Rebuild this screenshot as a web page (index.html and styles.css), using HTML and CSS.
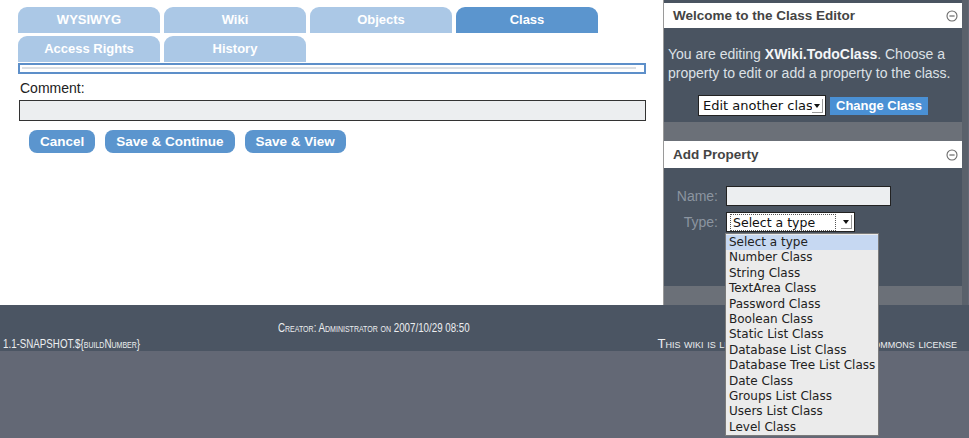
FILE: index.html
```html
<!DOCTYPE html>
<html lang="en">
<head>
    <meta charset="UTF-8">
    <title>Class Editor</title>
    <link rel="stylesheet" href="styles.css">
</head>
<body>
    <div class="page">
        <div class="main">
            <div class="tabs">
                <div class="tab">WYSIWYG</div>
                <div class="tab">Wiki</div>
                <div class="tab">Objects</div>
                <div class="tab active">Class</div>
                <div class="tab">Access Rights</div>
                <div class="tab">History</div>
            </div>
            <div class="editbox"><div class="editbox-line"></div></div>

            <div class="comment-label">Comment:</div>
            <div class="comment-input"></div>

            <div class="buttons">
                <span class="button">Cancel</span>
                <span class="button">Save &amp; Continue</span>
                <span class="button">Save &amp; View</span>
            </div>
        </div>

        <div class="sidebar">
            <div class="panel-title">
                <span>Welcome to the Class Editor</span>
                <svg class="toggle" width="12" height="12" viewBox="0 0 12 12"><circle cx="6" cy="6" r="5" fill="none" stroke="#6a6a6a" stroke-width="1.1"/><line x1="3.4" y1="6" x2="8.6" y2="6" stroke="#6a6a6a" stroke-width="1.2"/></svg>
            </div>
            <div class="panel-body">
                <p class="intro">You are editing <b>XWiki.TodoClass</b>. Choose a property to edit or add a property to the class.</p>
                <div class="change-row">
                    <span class="fake-select wide"><span class="fake-value">Edit another class</span><span class="arrow"></span></span>
                    <span class="change-button">Change Class</span>
                </div>
            </div>
            <div class="panel-gap"></div>

            <div class="panel-title tall">
                <span>Add Property</span>
                <svg class="toggle" width="12" height="12" viewBox="0 0 12 12"><circle cx="6" cy="6" r="5" fill="none" stroke="#6a6a6a" stroke-width="1.1"/><line x1="3.4" y1="6" x2="8.6" y2="6" stroke="#6a6a6a" stroke-width="1.2"/></svg>
            </div>
            <div class="panel-body add-body">
                <div class="field-row">
                    <span class="field-label">Name:</span>
                    <span class="name-input"></span>
                </div>
                <div class="field-row">
                    <span class="field-label">Type:</span>
                    <span class="fake-select type-select"><span class="fake-value focused">Select a type</span><span class="arrow"></span></span>
                </div>
                <!-- open list of the type select -->
                <ul class="type-list">
                    <li class="selected">Select a type</li>
                    <li>Number Class</li>
                    <li>String Class</li>
                    <li>TextArea Class</li>
                    <li>Password Class</li>
                    <li>Boolean Class</li>
                    <li>Static List Class</li>
                    <li>Database List Class</li>
                    <li>Database Tree List Class</li>
                    <li>Date Class</li>
                    <li>Groups List Class</li>
                    <li>Users List Class</li>
                    <li>Level Class</li>
                </ul>
            </div>
            <div class="panel-gap"></div>
        </div>
    </div>

    <div class="footer">
        <div class="footer-info"><span>Creator: Administrator on 2007/10/29 08:50</span></div>
        <div class="footer-bottom">
            <span class="version">1.1-SNAPSHOT.${buildNumber}</span>
            <span class="license">This wiki is licensed under a Creative Commons license</span>
        </div>
    </div>
</body>
</html>
```

FILE: styles.css
```css
body {
    margin: 0;
    min-height: 100vh;
    background-color: #636875;
    font-family: 'Liberation Sans', Arial, sans-serif;
}
.page {
    display: flex;
    height: 305px;
}
.main {
    width: 664px;
    background: white;
    border-right: 1px solid #9a9a9a;
    padding: 7px 0 0 18px;
    box-sizing: border-box;
}
.tabs {
    display: grid;
    grid-template-columns: repeat(4, 142px);
    column-gap: 4px;
    row-gap: 3px;
}
.tab {
    height: 26px;
    line-height: 26px;
    text-align: center;
    background-color: #abc8e6;
    color: white;
    font-weight: bold;
    font-size: 13px;
    border-radius: 9px 9px 0 0;
}
.tab.active {
    background-color: #5b95ce;
}
.editbox {
    width: 628px;
    height: 11px;
    margin-top: 1px;
    border: 2px solid #5d8fc9;
    box-sizing: border-box;
    padding: 2px 8px 0 2px;
}
.editbox-line {
    border-top: 2px solid #dcdfe3;
}
.comment-label {
    margin: 6px 0 0 2px;
    font-size: 14px;
    color: #222;
    line-height: 17px;
}
.comment-input {
    width: 627px;
    height: 21px;
    margin: 3px 0 0 1px;
    background-color: #eceef0;
    border: 1px solid #333;
    box-sizing: border-box;
}
.buttons {
    display: flex;
    gap: 10px;
    margin: 9px 0 0 11px;
}
.button {
    height: 23px;
    line-height: 23px;
    padding: 0 11px;
    background-color: #5b95ce;
    color: white;
    font-weight: bold;
    font-size: 13.5px;
    border-radius: 8px;
}

/* right column with the editor panels */
.sidebar {
    width: 304px;
    background-color: #4a5461;
    border-right: 6px solid #5a616b;
    padding-top: 3px;
    box-sizing: border-box;
}
.panel-title {
    display: flex;
    justify-content: space-between;
    align-items: center;
    height: 25px;
    padding: 0 4px 0 9px;
    background: white;
    color: #444;
    font-weight: bold;
    font-size: 13.5px;
}
.panel-title.tall {
    height: 27px;
}
.panel-body {
    position: relative;
    height: 94px;
    padding: 17px 4px 0 4px;
    box-sizing: border-box;
}
.intro {
    margin: 0;
    font-size: 14px;
    line-height: 19px;
    color: #dde1e6;
}
.intro b {
    color: #f4f6f8;
}
.change-row {
    display: flex;
    justify-content: center;
    align-items: center;
    gap: 4px;
    margin-top: 12px;
}
.panel-gap {
    height: 19px;
    background-color: #6b7078;
}
.fake-select {
    display: flex;
    align-items: center;
    height: 21px;
    background: white;
    border: 1px solid #222;
    box-sizing: border-box;
    font-family: 'DejaVu Sans', sans-serif;
    font-size: 13px;
    color: #111;
    overflow: hidden;
    padding: 0 2px 0 4px;
}
.fake-select.wide {
    width: 128px;
}
.fake-value {
    flex: 1;
    white-space: nowrap;
    overflow: hidden;
}
.fake-value.focused {
    outline: 1px dotted #555;
    padding-left: 2px;
    margin-right: 6px;
}
.arrow {
    flex: none;
    width: 10px;
    height: 13px;
    border-right: 1px solid #999;
    border-bottom: 1px solid #999;
    background: white;
    position: relative;
}
.arrow::after {
    content: "";
    position: absolute;
    left: 2px;
    top: 5px;
    border-left: 3px solid transparent;
    border-right: 3px solid transparent;
    border-top: 4px solid #111;
}
.change-button {
    height: 18px;
    line-height: 18px;
    padding: 0 6px;
    background-color: #4a90d4;
    color: white;
    font-weight: bold;
    font-size: 13px;
}
.add-body {
    height: 118px;
    padding-top: 18px;
}
.field-row {
    display: flex;
    align-items: center;
    gap: 8px;
    margin-bottom: 6px;
}
.field-label {
    width: 50px;
    text-align: right;
    color: #8c95a0;
    font-size: 14px;
}
.name-input {
    width: 165px;
    height: 20px;
    background-color: #eceef0;
    border: 1px solid #222;
    box-sizing: border-box;
}
.type-select {
    width: 129px;
    height: 20px;
    font-size: 12.5px;
}
.type-list {
    position: absolute;
    left: 61px;
    top: 65px;
    width: 154px;
    margin: 0;
    padding: 1px 0 0;
    list-style: none;
    background-color: #ebebeb;
    border: 1px solid #7a7a7a;
    box-sizing: border-box;
    font-family: 'DejaVu Sans', sans-serif;
    font-size: 12px;
    color: #222;
    z-index: 2;
}
.type-list li {
    height: 15.4px;
    line-height: 15.4px;
    padding-left: 3px;
    white-space: nowrap;
}
.type-list li.selected {
    background-color: #c6d8f2;
}

/* footer, set in a narrowed small-caps face */
.footer {
    height: 46px;
    background-color: #4b5563;
    color: #eceef0;
    font-size: 12.5px;
    font-variant: small-caps;
}
.footer span {
    display: inline-block;
    white-space: nowrap;
    transform: scaleX(0.78);
    transform-origin: left center;
}
.footer-info {
    padding: 16px 0 0 278px;
    line-height: 14px;
}
.footer-bottom {
    display: flex;
    justify-content: space-between;
    padding: 2px 12px 0 3px;
    line-height: 14px;
}
.footer .license {
    transform: none;
    font-size: 13px;
}
```
